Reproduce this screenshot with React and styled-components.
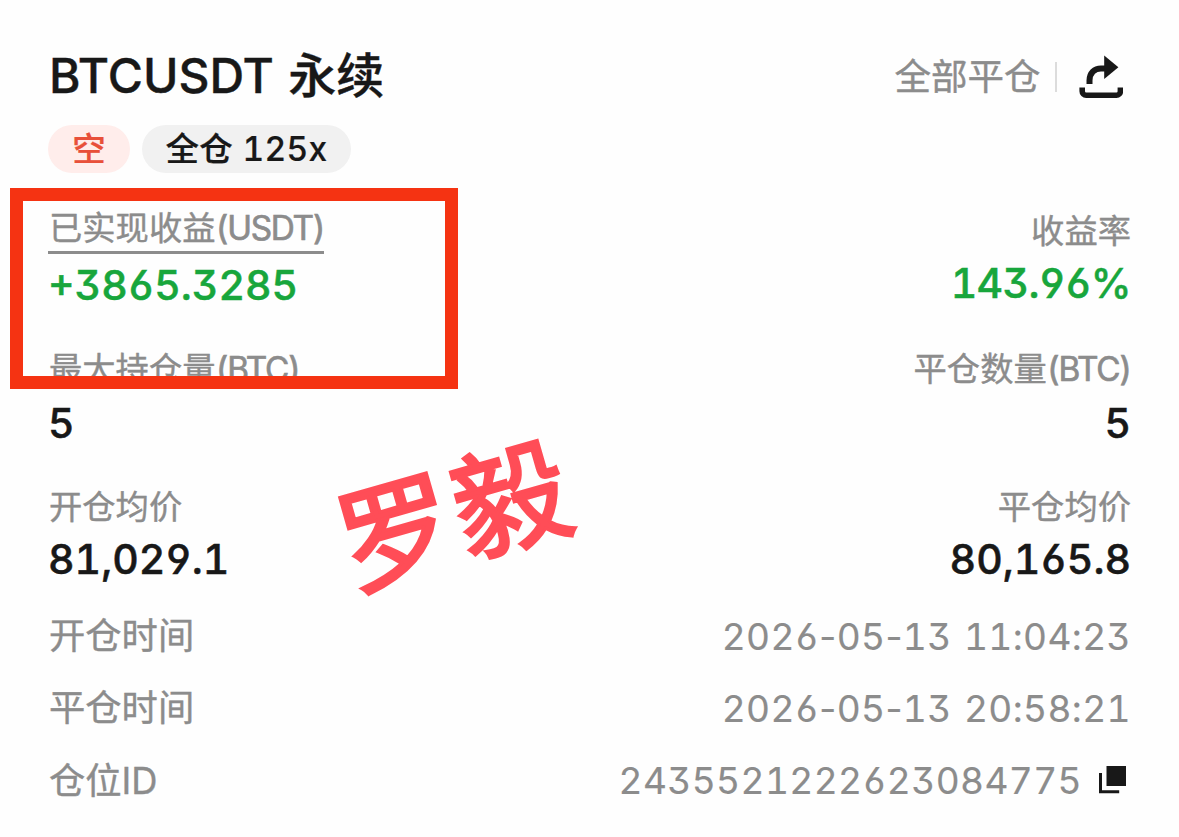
import { Fragment } from "react";
import styled, { createGlobalStyle } from "styled-components";

const stats = [
  {
    left: { label: "已实现收益", unit: "(USDT)", value: "+3865.3285", underline: true },
    right: { label: "收益率", value: "143.96%", tight: true },
    tone: "profit",
  },
  {
    left: { label: "最大持仓量", unit: "(BTC)", value: "5" },
    right: { label: "平仓数量", unit: "(BTC)", value: "5" },
    gap: 12,
  },
  {
    left: { label: "开仓均价", value: "81,029.1" },
    right: { label: "平仓均价", value: "80,165.8" },
  },
];

const details = [
  { label: "开仓时间", value: "2026-05-13 11:04:23", lift: true },
  { label: "平仓时间", value: "2026-05-13 20:58:21", lift: true },
  { label: "仓位ID", value: "2435521222623084775", copy: true },
];

const ShareIcon = () => (
  <svg width="44" height="44" viewBox="0 0 44 44" fill="none">
    <path
      d="M3.2 32.5v3.7a4 4 0 0 0 4 4h30.2a4 4 0 0 0 4-4v-3.7"
      stroke="#181818"
      strokeWidth="5.6"
    />
    <path d="M10.5 29V25.5C10.5 18 15.5 13.4 22 13.4h5" stroke="#181818" strokeWidth="6" />
    <path d="M25.2 .4 39.4 12.2 25.2 24z" fill="#181818" />
  </svg>
);

const CopyIcon = () => (
  <svg width="28" height="28" viewBox="0 0 28 28">
    <path d="M7.5 0H27v20H7.5z" fill="#181818" />
    <path d="M0 7h3v17.2h17.2v3H0z" fill="#181818" />
  </svg>
);

const Stat = ({ label, unit, value, underline, tone, gap, tight, end }) => (
  <StatBox $end={end}>
    <StatLabel $underline={underline} $gap={gap} $end={end}>
      {label}
      {unit && <Unit>{unit}</Unit>}
    </StatLabel>
    <StatValue $tone={tone} $tight={tight}>
      {value}
    </StatValue>
  </StatBox>
);

const App = () => {
  return (
    <Page>
      <GlobalStyle />

      <Header>
        <Title>BTCUSDT 永续</Title>
        <Actions>
          <Status>全部平仓</Status>
          <Divider />
          <ShareIcon />
        </Actions>
      </Header>

      <Tags>
        <Tag $short>空</Tag>
        <Tag>全仓 125x</Tag>
      </Tags>

      <Stats>
        {stats.map((row) => (
          <StatRow key={row.left.label}>
            <Stat {...row.left} tone={row.tone} gap={row.gap} />
            <Stat {...row.right} tone={row.tone} gap={row.gap} end />
          </StatRow>
        ))}
      </Stats>

      <Details>
        {details.map((item) => (
          <DetailRow key={item.label}>
            <DetailLabel $lift={item.lift}>{item.label}</DetailLabel>
            <DetailValue $copy={item.copy}>
              <span>
                {item.value.split("-").map((part, i) => (
                  <Fragment key={i}>
                    {i > 0 && <Hyphen>-</Hyphen>}
                    {part}
                  </Fragment>
                ))}
              </span>
              {item.copy && <CopyIcon />}
            </DetailValue>
          </DetailRow>
        ))}
      </Details>

      <Highlight />
      <Watermark>罗毅</Watermark>
    </Page>
  );
};

export default App;

/* ================= STYLES ================= */

const GlobalStyle = createGlobalStyle`
  * {
    box-sizing: border-box;
  }

  body {
    margin: 0;
    background: #fefefe;
  }

  svg {
    display: block;
    flex-shrink: 0;
  }
`;

const Page = styled.div`
  position: relative;
  width: 1179px;
  height: 837px;
  padding: 45px 48px 0;
  overflow: hidden;
  color: #181818;
  font-family: Inter, "Noto Sans CJK SC", sans-serif;
  font-feature-settings: "tnum", "cv03", "cv04", "cv09";
  white-space: nowrap;
`;

const Header = styled.div`
  display: flex;
  justify-content: space-between;
  height: 60px;
`;

const Title = styled.h1`
  margin: 0;
  padding: 1px 0 0 1px;
  font-size: 48px;
  font-weight: 500;
  line-height: 60px;
  word-spacing: 1.5px;
  -webkit-text-stroke: 0.4px #181818;
`;

const Actions = styled.div`
  display: flex;
  align-items: center;
  padding: 4px 8px 0 0;
`;

const Status = styled.span`
  color: #8c8c8c;
  font-size: 36.5px;
  line-height: 56px;
  -webkit-text-stroke: 0.4px #8c8c8c;
`;

const Divider = styled.span`
  width: 2.5px;
  height: 30px;
  margin: 0 22px 0 14px;
  background: #dcdcdc;
`;

const Tags = styled.div`
  display: flex;
  gap: 12px;
  margin-top: 20px;
`;

const Tag = styled.span`
  width: ${(p) => (p.$short ? "82px" : "209px")};
  height: 48px;
  border-radius: 24px;
  background: ${(p) => (p.$short ? "#ffedeb" : "#f1f1f1")};
  color: ${(p) => (p.$short ? "#e8503a" : "#181818")};
  font-size: 33.5px;
  font-weight: 500;
  line-height: 48px;
  text-align: center;
  letter-spacing: ${(p) => (p.$short ? "0" : "0.3px")};
  -webkit-text-stroke: 0.2px currentColor;
`;

const Stats = styled.div`
  display: flex;
  flex-direction: column;
  margin-top: 36px;
`;

const StatRow = styled.div`
  display: flex;
  justify-content: space-between;
  height: 138px;
`;

const StatBox = styled.div`
  display: flex;
  flex-direction: column;
  align-items: ${(p) => (p.$end ? "flex-end" : "flex-start")};
`;

const StatLabel = styled.span`
  height: ${(p) => (p.$underline ? "45px" : "43px")};
  padding-left: ${(p) => (p.$end ? "0" : "1px")};
  border-bottom: ${(p) => (p.$underline ? "3px solid #8c8c8c" : "none")};
  margin-bottom: ${(p) => p.$gap || 10}px;
  color: #8c8c8c;
  font-size: 33.3px;
  line-height: ${(p) => (p.$underline ? "38px" : "44px")};
  -webkit-text-stroke: 0.4px #8c8c8c;
`;

const Unit = styled.span`
  letter-spacing: -1.3px;
  -webkit-text-stroke: 0.7px #8c8c8c;
`;

const StatValue = styled.span`
  color: ${(p) => (p.$tone === "profit" ? "#18a63c" : "#181818")};
  font-size: 41px;
  font-weight: 500;
  line-height: 42px;
  letter-spacing: ${(p) => (p.$tight ? "-0.6px" : "0")};
  -webkit-text-stroke: 0.5px currentColor;
`;

const Details = styled.div`
  display: flex;
  flex-direction: column;
  margin-top: -22px;
`;

const DetailRow = styled.div`
  display: flex;
  align-items: center;
  justify-content: space-between;
  height: 72px;
`;

const DetailLabel = styled.span`
  padding: 0 0 ${(p) => (p.$lift ? "3px" : "0")} 1px;
  color: #8c8c8c;
  font-size: 36.3px;
  line-height: 48px;
  -webkit-text-stroke: 0.4px #8c8c8c;
`;

const DetailValue = styled.span`
  display: flex;
  align-items: center;
  gap: 17px;
  padding-right: ${(p) => (p.$copy ? "4px" : "0")};
  color: #8c8c8c;
  font-size: 37px;
  line-height: 48px;
  letter-spacing: 0.4px;
  word-spacing: 2px;
  -webkit-text-stroke: 0.2px #8c8c8c;

  svg {
    margin-top: -3px;
  }
`;

const Hyphen = styled.span`
  font-feature-settings: normal;
`;

/* frame marking the realised profit */
const Highlight = styled.div`
  position: absolute;
  top: 188px;
  left: 10px;
  width: 448px;
  height: 201px;
  border: 13px solid #f53312;
`;

const Watermark = styled.div`
  position: absolute;
  top: 447px;
  left: 337px;
  color: #ff4d57;
  font-size: 115px;
  font-weight: 400;
  line-height: 140px;
  letter-spacing: 4px;
  transform: rotate(-16deg);
  -webkit-text-stroke: 3.2px #ff4d57;
`;
